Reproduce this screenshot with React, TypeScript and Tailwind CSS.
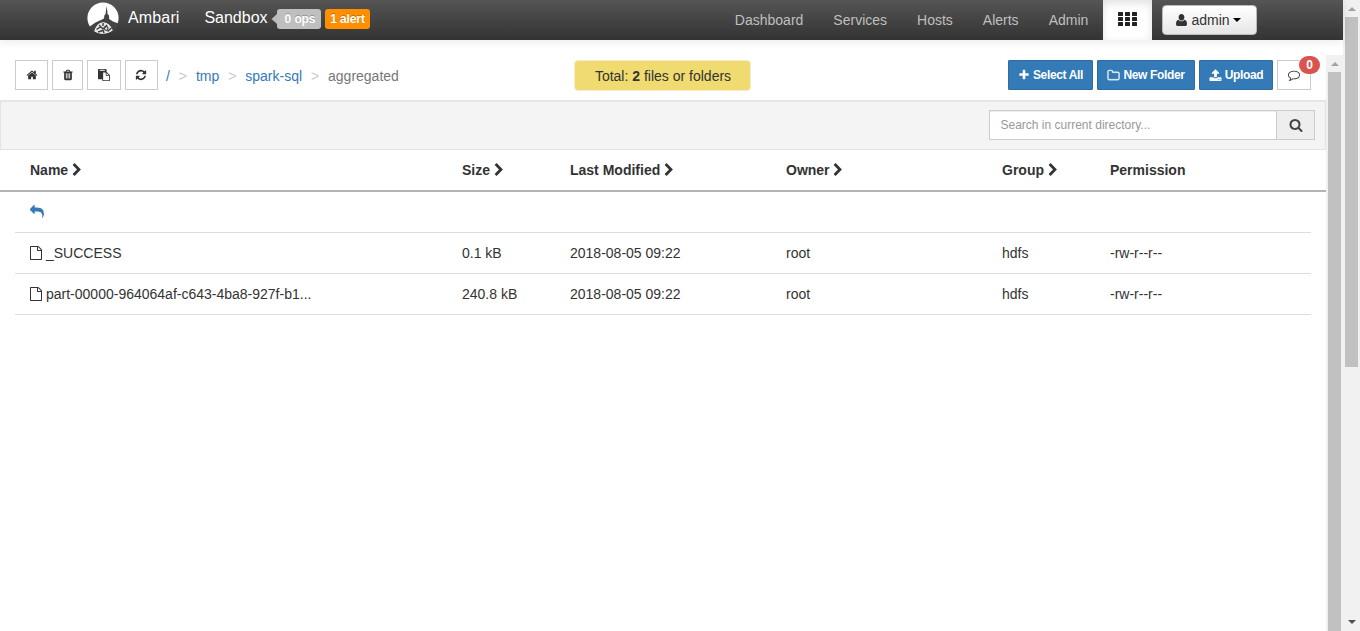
import React from "react";

const ICONS = {
  home: "M1472 992v480q0 26-19 45t-45 19h-384v-384h-256v384h-384q-26 0-45-19t-19-45v-480q0-1 .5-3t.5-3l575-474 575 474q1 2 1 6zm223-69l-62 74q-8 9-21 11h-3q-13 0-21-7l-692-577-692 577q-12 8-24 7-13-2-21-11l-62-74q-8-10-7-23.5t11-21.5l719-599q32-26 76-26t76 26l244 204v-195q0-14 9-23t23-9h192q14 0 23 9t9 23v408l219 182q10 8 11 21.5t-7 23.5z",
  trash: "M704 1376v-704q0-14-9-23t-23-9h-64q-14 0-23 9t-9 23v704q0 14 9 23t23 9h64q14 0 23-9t9-23zm256 0v-704q0-14-9-23t-23-9h-64q-14 0-23 9t-9 23v704q0 14 9 23t23 9h64q14 0 23-9t9-23zm256 0v-704q0-14-9-23t-23-9h-64q-14 0-23 9t-9 23v704q0 14 9 23t23 9h64q14 0 23-9t9-23zm-544-992h448l-48-117q-7-9-17-11h-317q-10 2-17 11zm928 32v64q0 14-9 23t-23 9h-96v948q0 83-47 143.5t-113 60.5h-832q-66 0-113-58.5t-47-141.5v-952h-96q-14 0-23-9t-9-23v-64q0-14 9-23t23-9h309l70-167q15-37 54-63t79-26h320q40 0 79 26t54 63l70 167h309q14 0 23 9t9 23z",
  paste: "M768 1664h896v-640h-416q-40 0-68-28t-28-68v-416h-384v1152zm256-1440v-64q0-13-9.5-22.5t-22.5-9.5h-704q-13 0-22.5 9.5t-9.5 22.5v64q0 13 9.5 22.5t22.5 9.5h704q13 0 22.5-9.5t9.5-22.5zm256 672h299l-299-299v299zm512 128v672q0 40-28 68t-68 28h-960q-40 0-68-28t-28-68v-160h-544q-40 0-68-28t-28-68v-1344q0-40 28-68t68-28h1088q40 0 68 28t28 68v328q21 13 36 28l408 408q28 28 48 76t20 88z",
  refresh: "M1639 1056q0 5-1 7-64 268-268 434.5t-478 166.5q-146 0-282.5-55t-243.5-157l-129 129q-19 19-45 19t-45-19-19-45v-448q0-26 19-45t45-19h448q26 0 45 19t19 45-19 45l-137 137q71 66 161 102t187 36q134 0 250-65t186-179q11-17 53-117 8-23 30-23h192q13 0 22.5 9.5t9.5 22.5zm25-800v448q0 26-19 45t-45 19h-448q-26 0-45-19t-19-45 19-45l138-138q-148-137-349-137-134 0-250 65t-186 179q-11 17-53 117-8 23-30 23h-199q-13 0-22.5-9.5t-9.5-22.5v-7q65-268 270-434.5t480-166.5q146 0 284 55.5t245 156.5l130-129q19-19 45-19t45 19 19 45z",
  plus: "M1600 736v192q0 40-28 68t-68 28h-416v416q0 40-28 68t-68 28h-192q-40 0-68-28t-28-68v-416h-416q-40 0-68-28t-28-68v-192q0-40 28-68t68-28h416v-416q0-40 28-68t68-28h192q40 0 68 28t28 68v416h416q40 0 68 28t28 68z",
  folder: "M1600 1312v-704q0-40-28-68t-68-28h-704q-40 0-68-28t-28-68v-64q0-40-28-68t-68-28h-320q-40 0-68 28t-28 68v960q0 40 28 68t68 28h1216q40 0 68-28t28-68zm128-704v704q0 92-66 158t-158 66h-1216q-92 0-158-66t-66-158v-960q0-92 66-158t158-66h320q92 0 158 66t66 158v32h672q92 0 158 66t66 158z",
  upload: "M1344 1472q0-26-19-45t-45-19-45 19-19 45 19 45 45 19 45-19 19-45zm256 0q0-26-19-45t-45-19-45 19-19 45 19 45 45 19 45-19 19-45zm128-224v320q0 40-28 68t-68 28h-1472q-40 0-68-28t-28-68v-320q0-40 28-68t68-28h427q21 56 70.5 92t110.5 36h256q61 0 110.5-36t70.5-92h427q40 0 68 28t28 68zm-325-648q-17 40-59 40h-256v448q0 26-19 45t-45 19h-256q-26 0-45-19t-19-45v-448h-256q-42 0-59-40-17-39 14-69l448-448q18-19 45-19t45 19l448 448q31 30 14 69z",
  comment: "M896 384q-204 0-381.5 69.5t-282 187.5-104.5 255q0 112 71.5 213.5t201.5 175.5l87 50-27 96q-24 91-70 172 152-63 275-171l43-38 57 6q69 8 130 8 204 0 381.5-69.5t282-187.5 104.5-255-104.5-255-282-187.5-381.5-69.5zm896 512q0 174-120 321.5t-326 233-450 85.5q-70 0-145-8-198 175-460 242-49 14-114 22h-5q-15 0-27-10.5t-16-27.5v-1q-3-4-.5-12t2-10 4.5-9.5l6-9 7-8.5 8-9q7-8 31-34.5t34.5-38 31-39.5 32.5-51 27-59 26-76q-157-89-247.5-220t-90.5-281q0-174 120-321.5t326-233 450-85.5 450 85.5 326 233 120 321.5z",
  search: "M1216 832q0-185-131.5-316.5t-316.5-131.5-316.5 131.5-131.5 316.5 131.5 316.5 316.5 131.5 316.5-131.5 131.5-316.5zm512 832q0 52-38 90t-90 38q-54 0-90-38l-343-342q-179 124-399 124-143 0-273.5-55.5t-225-150-150-225-55.5-273.5 55.5-273.5 150-225 225-150 273.5-55.5 273.5 55.5 225 150 150 225 55.5 273.5q0 220-124 399l343 343q37 37 37 90z",
  chevron: "M1363 877l-742 742q-19 19-45 19t-45-19l-166-166q-19-19-19-45t19-45l531-531-531-531q-19-19-19-45t19-45l166-166q19-19 45-19t45 19l742 742q19 19 19 45t-19 45z",
  reply: "M1792 1120q0 166-127 451-3 7-10.5 24t-13.5 30-13 22q-12 17-28 17-15 0-23.5-10t-8.5-25q0-9 2.5-26.5t2.5-23.5q5-68 5-123 0-112-19.5-200.5t-54-153.5-89-112-117-82-142-50-159.5-25.5-171-7.5h-224v256q0 26-19 45t-45 19-45-19l-512-512q-19-19-19-45t19-45l512-512q19-19 45-19t45 19 19 45v256h224q713 0 875 403 53 134 53 333z",
  file: "M1596 380q28 28 48 76t20 88v1152q0 40-28 68t-68 28h-1344q-40 0-68-28t-28-68v-1600q0-40 28-68t68-28h896q40 0 88 20t76 48zm-444-244v376h376q-10-29-22-41l-313-313q-12-12-41-22zm384 1528v-1024h-416q-40 0-68-28t-28-68v-416h-768v1536h1280z",
};

function Icon({ name, className }: { name: keyof typeof ICONS; className: string }) {
  return (
    <svg viewBox="0 0 1792 1792" fill="currentColor" className={"shrink-0 " + className}>
      <path d={ICONS[name]} />
    </svg>
  );
}

function Logo() {
  return (
    <svg viewBox="0 0 32 32" className="-mt-px h-8 w-8 shrink-0">
      <circle cx="16" cy="16" r="15.6" fill="#fff" />
      <path d="M19.6 4 L20.3 9 L20.6 12 L22 13.5 L22.2 17 L26 19.5 L31.5 21.5 L28.5 27 L25.5 29 Q23 20.3 15.5 20.2 Q9.5 21 7 30 L2 25 L8.5 20.5 L14 18 L17 16.5 L17.3 13.5 L18.6 12 L18.9 9 Z" fill="#444" />
      <path d="M7.5 29.5 Q10 21.3 16 20.8 Q23 21 25.8 28.5 Q16 34.5 7.5 29.5Z" fill="#e8e8e8" />
      <path d="M9.5 27.5 L14 24.5 M12 23 L16 27 L20 23 M16 21 V24 M20.5 29.5 L24.5 26 M11 30 L16 28.5 L17 31" stroke="#444" strokeWidth="1.5" fill="none" />
      <circle cx="19.2" cy="26.5" r="1.8" fill="none" stroke="#444" strokeWidth="1.2" />
    </svg>
  );
}

const GRID = "grid grid-cols-[432px_108px_216px_216px_108px_1fr]";

const HEADINGS = [
  { label: "Name", sortable: true },
  { label: "Size", sortable: true },
  { label: "Last Modified", sortable: true },
  { label: "Owner", sortable: true },
  { label: "Group", sortable: true },
  { label: "Permission", sortable: false },
];

const FILES = [
  { name: "_SUCCESS", size: "0.1 kB" },
  { name: "part-00000-964064af-c643-4ba8-927f-b1...", size: "240.8 kB" },
];

function Header() {
  return (
    <header className="relative z-10 flex h-10 shrink-0 bg-gradient-to-b from-[#555] to-[#333] pl-[87px] text-white shadow-[0_1px_10px_rgba(0,0,0,0.1)]">
      <div className="flex h-9 items-center pt-px">
        <Logo />
        <span className="-mt-[2px] ml-[9px] w-[76px] text-base leading-5 tracking-[0.15px]">Ambari</span>
        <span className="-mt-[2px] w-[67px] pl-[0.4px] text-base leading-5">Sandbox</span>
        <svg viewBox="0 0 6 10" className="h-[10px] w-[6px]">
          <path d="M6 0 L0.5 5 L6 10Z" fill="#bbb" />
        </svg>
        <span className="flex h-5 w-[44px] items-center justify-center rounded-[3px] bg-[#bfbfbf] pl-[2px] text-xs font-bold tracking-[-0.1px] [text-shadow:0_-1px_0_rgba(0,0,0,0.25)]">0 ops</span>
        <span className="ml-1 flex h-5 w-[45px] items-center justify-center rounded-[3px] bg-[#ff8e00] text-xs font-bold tracking-[-0.1px] [text-shadow:0_-1px_0_rgba(0,0,0,0.25)]">1 alert</span>
      </div>
      <nav className="ml-auto flex text-sm leading-10 text-[#bfbfbf]">
        <span className="mr-[30px]">Dashboard</span>
        <span className="mr-[30px]">Services</span>
        <span className="mr-[30px]">Hosts</span>
        <span className="mr-[30px]">Alerts</span>
        <span className="mr-[14.7px]">Admin</span>
      </nav>
      <div className="flex w-[49px] justify-center bg-white pt-3 shadow-[inset_0_3px_8px_rgba(0,0,0,0.125)]">
        <svg viewBox="0 0 19 14" fill="#222" className="h-[14px] w-[19px]">
          {[0, 5, 10].map((y) =>
            [0, 7, 14].map((x) => <rect key={x + "-" + y} x={x} y={y} width="5" height="4" rx="0.6" />)
          )}
        </svg>
      </div>
      <div className="mt-[5px] mr-[86px] ml-[10px] flex h-[30px] w-[95px] items-center justify-center rounded border border-[#bbb] bg-gradient-to-b from-white to-[#e6e6e6] pr-[2px] text-sm leading-5 text-[#333]">
        <svg viewBox="0 0 11 12" className="mr-1 h-3 w-[11px]" fill="#333">
          <path d="M5.5 0C7.2 0 8.4 1.3 8.4 3.2 8.4 5.2 7.1 6.6 5.5 6.6S2.6 5.2 2.6 3.2C2.6 1.3 3.8 0 5.5 0ZM2.7 5.7C3.4 6.7 4.4 7.2 5.5 7.2s2.1-.5 2.8-1.5C10.2 5.9 11 7.4 11 9.9 11 11.200 10.200 12 9.100 12H1.900C.8 12 0 11.200 0 9.900 0 7.400.8 5.900 2.700 5.700Z" />
        </svg>
        admin
        <svg viewBox="0 0 8 4" className="ml-[3px] h-1 w-2" fill="#000">
          <path d="M0 0h8L4 4Z" />
        </svg>
      </div>
    </header>
  );
}

const TOOL = "flex h-[30px] items-center justify-center border border-[#ccc] bg-white text-[#333]";
const ACTION = "flex h-[30px] items-center justify-center gap-[3px] rounded-[1px] border border-[#2e6da4] bg-[#337ab7] text-xs font-bold tracking-[-0.35px] text-white";

function Toolbar() {
  return (
    <div className="flex h-[60px] items-start pt-5 pl-[15px]">
      <div className={TOOL + " w-[33px]"}><Icon name="home" className="h-3 w-3" /></div>
      <div className={TOOL + " ml-1 w-[31px]"}><Icon name="trash" className="h-3 w-3" /></div>
      <div className={TOOL + " ml-1 w-[34px]"}><Icon name="paste" className="h-3 w-3" /></div>
      <div className={TOOL + " ml-1 w-[33px] pr-px"}><Icon name="refresh" className="h-3 w-3" /></div>
      <div className="ml-2 flex w-[408px] text-sm leading-8 text-[#337ab7]">
        <span>/</span>
        <span className="w-[26px] text-center text-[#ccc]">&gt;</span>
        <span>tmp</span>
        <span className="w-[26px] text-center text-[#ccc]">&gt;</span>
        <span>spark-sql</span>
        <span className="w-[26px] text-center text-[#ccc]">&gt;</span>
        <span className="text-[#777]">aggregated</span>
      </div>
      <div className="h-[31px] w-[177px] shrink-0 rounded-sm border border-[#faebcc] bg-[#efdb6f] pl-px text-center text-sm leading-[30px] text-[#333]">
        Total: <b>2</b> files or folders
      </div>
      <div className={ACTION + " ml-[257px] w-[85px] shrink-0"}><Icon name="plus" className="h-3 w-3" />Select All</div>
      <div className={ACTION + " ml-1 w-[98px] shrink-0"}><Icon name="folder" className="h-[13px] w-[13px] stroke-current stroke-[40]" />New Folder</div>
      <div className={ACTION + " ml-1 w-[74px] shrink-0"}><Icon name="upload" className="h-[13px] w-[13px]" />Upload</div>
      <div className={TOOL + " relative ml-1 w-[34px] shrink-0"}>
        <Icon name="comment" className="h-3 w-3" />
        <span className="absolute -top-[5px] left-[21px] flex h-[18px] w-[21px] items-center justify-center rounded-[10px] bg-[#d9534f] text-xs font-bold text-white">0</span>
      </div>
    </div>
  );
}

function FileTable() {
  return (
    <div className="text-sm leading-5 text-[#333]">
      <div className="flex h-[50px] justify-end border border-[#e3e3e3] bg-[#f4f4f4] pt-[9px] pr-[10px] shadow-[inset_0_1px_1px_rgba(0,0,0,0.05)]">
        <div className="h-[30px] w-[288px] border border-[#ccc] bg-white pl-[10.5px] text-xs leading-7 text-[#999] shadow-[inset_0_1px_1px_rgba(0,0,0,0.075)]">
          Search in current directory...
        </div>
        <div className="flex h-[30px] w-[38px] items-center justify-center border border-l-0 border-[#ccc] bg-[#eee] text-[#444]">
          <Icon name="search" className="h-[14px] w-[14px]" />
        </div>
      </div>
      <div className={GRID + " h-[42px] border-b-2 border-[#b4b4b4] pt-[10px] pl-[30px] font-bold"}>
        {HEADINGS.map((h) => (
          <div key={h.label} className="flex">
            {h.label}
            {h.sortable && <Icon name="chevron" className="mt-[3px] ml-[1.5px] h-[14px] w-[14px]" />}
          </div>
        ))}
      </div>
      <div className="mx-[15px] h-[41px] border-b border-[#ddd] pt-[13px] pl-[15px] text-[#337ab7]">
        <Icon name="reply" className="h-[14px] w-[14px]" />
      </div>
      {FILES.map((f) => (
        <div key={f.name} className={GRID + " mx-[15px] h-[41px] border-b border-[#ddd] pt-[10px] pl-[15px]"}>
          <div className="flex">
            <Icon name="file" className="mt-[3px] mr-[3px] -ml-px h-[14px] w-[14px]" />
            {f.name}
          </div>
          <div>{f.size}</div>
          <div>2018-08-05 09:22</div>
          <div>root</div>
          <div>hdfs</div>
          <div>-rw-r--r--</div>
        </div>
      ))}
    </div>
  );
}

export default function App() {
  return (
    <div className="flex h-[631px] w-[1360px] overflow-hidden bg-white font-['Liberation_Sans',Arial,sans-serif]">
      <div className="flex w-[1343px] flex-col">
        <Header />
        <div className="flex flex-1">
          <main className="w-[1326px]">
            <Toolbar />
            <FileTable />
          </main>
          <div className="mt-[15px] flex w-[17px] flex-col items-center bg-[#f1f1f1]">
            <svg viewBox="0 0 8 4" className="my-[6.5px] h-1 w-2" fill="#a3a3a3"><path d="M0 4L4 0l4 4Z" /></svg>
            <div className="w-[13px] flex-1 bg-[#c1c1c1]" />
          </div>
        </div>
      </div>
      <div className="flex w-[17px] flex-col items-center bg-[#f1f1f1]">
        <svg viewBox="0 0 8 4" className="mt-[7px] mb-[6px] h-1 w-2 shrink-0" fill="#a3a3a3"><path d="M0 4L4 0l4 4Z" /></svg>
        <div className="h-[350px] w-[13px] bg-[#c1c1c1]" />
        <svg viewBox="0 0 8 4" className="mt-auto mb-[7px] h-1 w-2 shrink-0" fill="#505050"><path d="M0 0h8L4 4Z" /></svg>
      </div>
    </div>
  );
}
